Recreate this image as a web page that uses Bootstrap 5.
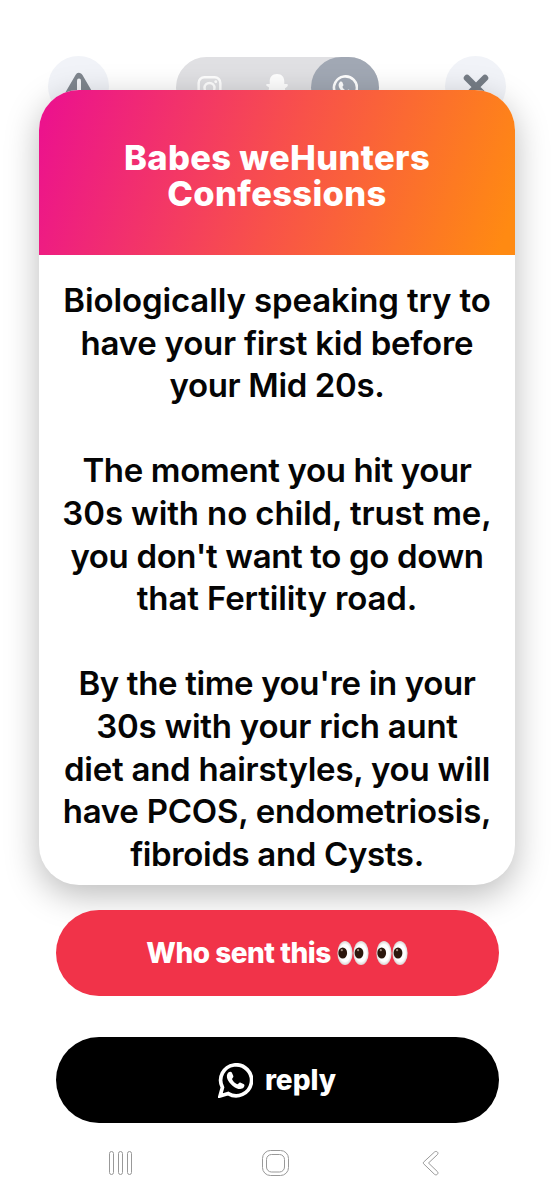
<!DOCTYPE html>
<html lang="en">
<head>
<meta charset="utf-8">
<meta name="viewport" content="width=device-width, initial-scale=1">
<title>Confessions</title>
<link href="https://cdn.jsdelivr.net/npm/bootstrap@5.3.0/dist/css/bootstrap.min.css" rel="stylesheet">
<style>
body{font-family:Inter,"Liberation Sans",sans-serif;background:#fff;height:1200px;overflow:hidden}
.topbar{padding:56px 48px 0}
.round-btn{width:61px;height:61px;background:#f1f3f8}
.switcher{width:203px;height:61px;background:#e0e0e3;border-radius:31px;margin-top:1px}
.switcher>span{width:68px;height:61px}
.switcher>.on{background:#a1a8b4;border-radius:31px}
.confession{margin:-28px 39px 0;height:795px;border-radius:40px;overflow:hidden;border:0;box-shadow:0 10px 34px rgba(0,0,0,.27)}
.confession-head{height:165px;background:linear-gradient(109deg,#ec138c 3%,#f8514a 51%,#ff8a12 97%);padding-top:50px}
.confession-head h1{font-size:34.5px;line-height:36px;font-weight:800;letter-spacing:.35px}
.message{font-size:33px;font-weight:600;line-height:42.6px;color:#050505;padding-top:24px;letter-spacing:-.12px}
.message p{margin-bottom:42.6px}
.tight{letter-spacing:-.36px}
.snug{letter-spacing:-.24px}
.pill{margin:0 55.5px;height:86px;border-radius:43px;border:0;color:#fff;font-weight:800;font-size:28px;line-height:34px}
.pill-red{background:#f13349;margin-top:25px}
.pill-black{background:#000;margin-top:41px}
.who{letter-spacing:-.5px}
.reply-gap{gap:12px}
.eyes-gap{gap:6.5px}
.eyes{position:relative;width:32px;height:32px;font-size:22px;line-height:32px}
.eyes svg{position:absolute;inset:0}
.sysnav{height:78px}
</style>
</head>
<body class="d-flex flex-column">
<header class="topbar d-flex justify-content-between align-items-start flex-shrink-0">
  <span class="round-btn rounded-circle d-flex align-items-center justify-content-center">
    <svg width="36" height="34" viewBox="0 0 36 34"><path d="M18 7 L32 31 H4Z" fill="#7f868e" stroke="#7f868e" stroke-width="8" stroke-linejoin="round"/><path d="M18 10.500v10" stroke="#f4f5f8" stroke-width="4" stroke-linecap="round"/><circle cx="18" cy="28" r="2.400" fill="#fff"/></svg>
  </span>
  <div class="switcher d-flex">
    <span class="d-flex align-items-center justify-content-center"><svg width="25" height="26" viewBox="0 0 26 26" fill="none" stroke="#fff" stroke-width="2.600"><rect x="1.700" y="1.700" width="22.600" height="22.600" rx="6"/><circle cx="13" cy="13" r="5.200"/><circle cx="19.500" cy="6.500" r="1.500" fill="#fff" stroke="none"/></svg></span>
    <span class="d-flex align-items-center justify-content-center"><svg width="26" height="32" viewBox="0 0 26 28"><path d="M13 0C8 0 5.600 3.500 5.700 7.500V10c-1 .3-3.400-.6-3.600.8-.1 1.500 3 1.800 3 3.200C4.500 18 1 20 1 21c0 1.500 4 1.500 4.500 3 2 0 3.500-.5 5 .8 1.600 1.300 3.400 1.300 5 0 1.500-1.300 3-.8 5-.8.500-1.500 4.500-1.500 4.500-3 0-1-3.500-3-4.100-6 0-1.400 3.100-1.700 3-4.200-.2-1.400-2.600-.5-3.600-.8V7.500C20.400 3.500 18 0 13 0Z" fill="#fff"/></svg></span>
    <span class="on d-flex align-items-center justify-content-center"><svg width="26" height="26" viewBox="0 0 34 34"><path d="M2 32l2.300-8.300A15 15 0 1 1 10 29.700Z" fill="none" stroke="#fff" stroke-width="3.400"/><path d="M10.300 9.100c.7-.8 2.600-.9 3.100.1l1.500 3.500c.5 1.300-1.400 2.200-1.200 3 .9 2.100 2.700 3.800 4.900 4.900.9.300 1.900-2.100 3-1.700l3.600 1.700c1 .5.400 2.500-.3 3.300-2.400 2.500-6.700 1.400-10.800-1.900-3.900-3.200-7.800-8.900-3.800-12.900Z" fill="#fff"/></svg></span>
  </div>
  <span class="round-btn rounded-circle d-flex align-items-center justify-content-center">
    <svg width="26" height="26" viewBox="0 0 26 26"><path d="M4 4l18 18M22 4L4 22" stroke="#767d86" stroke-width="6.500" stroke-linecap="round"/></svg>
  </span>
</header>

<main class="card confession position-relative flex-shrink-0">
  <div class="confession-head text-center text-white flex-shrink-0">
    <h1 class="m-0">Babes weHunters<br>Confessions</h1>
  </div>
  <div class="message text-center text-nowrap flex-shrink-0">
    <p>Biologically speaking try to<br><span class="snug">have your first kid before</span><br><span class="tight">your Mid 20s.</span></p>
    <p><span class="tight">The moment you hit your</span><br>30s with no child, trust me,<br><span class="tight">you don't want to go down</span><br>that Fertility road.</p>
    <p><span class="tight">By the time you're in your</span><br><span class="snug">30s with your rich aunt</span><br><span class="snug">diet and hairstyles, you will</span><br><span class="snug">have PCOS, endometriosis,</span><br><span class="tight">fibroids and Cysts.</span></p>
  </div>
</main>

<button class="pill pill-red position-relative d-flex align-items-center justify-content-center flex-shrink-0 eyes-gap">
  <span class="who">Who sent this</span>
  <span class="eyes">👀<svg width="32" height="32" viewBox="0 -3 32 32"><use href="#eyePair"/></svg></span>
  <span class="eyes">👀<svg width="32" height="32" viewBox="0 -3 32 32"><use href="#eyePair"/></svg></span>
</button>
<button class="pill pill-black d-flex align-items-center justify-content-center flex-shrink-0 reply-gap">
  <svg width="35" height="35" viewBox="0 0 34 34"><path d="M2 32l2.300-8.300A15 15 0 1 1 10 29.700Z" fill="none" stroke="#fff" stroke-width="3.600"/><path d="M10.300 9.100c.7-.8 2.600-.9 3.100.1l1.500 3.500c.5 1.300-1.400 2.200-1.200 3 .9 2.100 2.700 3.800 4.900 4.900.9.300 1.900-2.100 3-1.700l3.600 1.700c1 .5.400 2.500-.3 3.300-2.400 2.500-6.700 1.400-10.800-1.900-3.900-3.200-7.800-8.900-3.800-12.900Z" fill="#fff"/></svg>
  <span>reply</span>
</button>

<nav class="sysnav d-flex flex-shrink-0">
  <svg width="554" height="78" viewBox="0 1123 554 78" fill="none" stroke="#999" stroke-width="1">
    <rect x="109.500" y="1151.500" width="4" height="23" rx="2"/><rect x="118.500" y="1151.500" width="4" height="23" rx="2"/><rect x="127.500" y="1151.500" width="4" height="23" rx="2"/>
    <rect x="262.500" y="1150.500" width="26" height="25" rx="8"/><rect x="266.500" y="1154.500" width="18" height="17.500" rx="5"/>
    <path d="M434.500 1152 423.500 1162.200Q423 1163 423.500 1163.700L434.500 1174.300C436.500 1176 439 1173.500 437.500 1171.700L428.500 1163 437.500 1154.500C439 1152.500 436.500 1150.500 434.500 1152Z"/>
  </svg>
</nav>

<svg width="0" height="0" class="position-absolute">
  <defs>
    <radialGradient id="eyeWhite"><stop offset=".7" stop-color="#fff"/><stop offset="1" stop-color="#d9d5d3"/></radialGradient>
    <g id="eyePair"><rect y="-3" width="32" height="32" fill="#f13349"/>
      <ellipse cx="8" cy="13" rx="7.600" ry="12" fill="url(#eyeWhite)"/><ellipse cx="24" cy="13" rx="7.600" ry="12" fill="url(#eyeWhite)"/>
      <ellipse cx="5.700" cy="13" rx="4.400" ry="5.600" fill="#2c170c"/><ellipse cx="22" cy="13" rx="4.400" ry="5.600" fill="#2c170c"/>
      <circle cx="4.800" cy="10.200" r="1.100" fill="#a58f80"/><circle cx="21.100" cy="10.200" r="1.100" fill="#a58f80"/></g>
  </defs>
</svg>
<script src="https://cdn.jsdelivr.net/npm/bootstrap@5.3.0/dist/js/bootstrap.bundle.min.js"></script>
</body>
</html>
